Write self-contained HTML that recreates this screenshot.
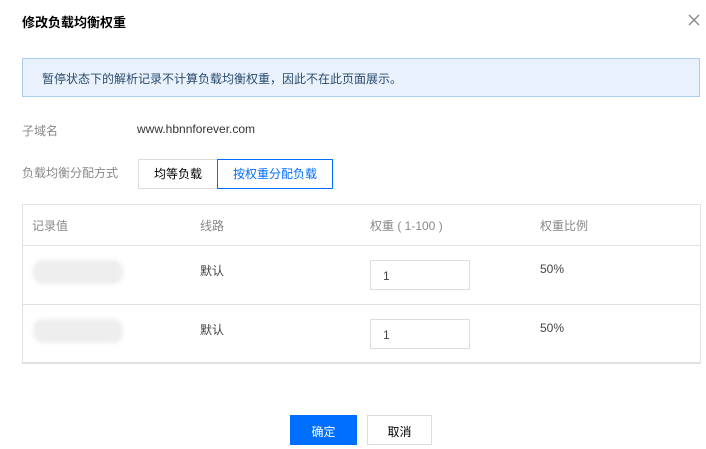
<!DOCTYPE html>
<html><head><meta charset="utf-8"><style>
*{margin:0;padding:0;box-sizing:border-box}
body{width:706px;height:433px;overflow:hidden;background:#fff;font-family:"Liberation Sans","Noto Sans CJK SC",sans-serif;font-size:12px;color:#444;position:relative}
.a{position:absolute}
</style></head><body>
<div class="a" style="left:22px;top:12px;font-size:13px;font-weight:bold;color:#000">修改负载均衡权重</div>
<svg class="a" style="left:688px;top:14px" width="12" height="12"><path d="M1 1L11 11M11 1L1 11" stroke="#888" stroke-width="1.4"/></svg>
<div class="a" style="left:22px;top:58px;width:678px;height:39px;background:#e9f2fc;border:1px solid #a9cdf0"></div>
<div class="a" style="left:42px;top:70px;color:#2a4a6e">暂停状态下的解析记录不计算负载均衡权重，因此不在此页面展示。</div>
<div class="a" style="left:22px;top:122px;color:#888">子域名</div>
<div class="a" style="left:137px;top:122px;color:#333">www.hbnnforever.com</div>
<div class="a" style="left:22px;top:164px;color:#888">负载均衡分配方式</div>
<div class="a" style="left:138px;top:159px;width:80px;height:30px;border:1px solid #ddd;text-align:center;line-height:28px;color:#000">均等负载</div>
<div class="a" style="left:217px;top:159px;width:116px;height:30px;border:1px solid #006eff;text-align:center;line-height:28px;color:#006eff">按权重分配负载</div>
<div class="a" style="left:22px;top:204px;width:679px;height:160px;border:1px solid #e2e2e2;border-bottom:2px solid #e2e2e2"></div>
<div class="a" style="left:22px;top:245px;width:679px;height:1px;background:#e2e2e2"></div>
<div class="a" style="left:22px;top:304px;width:679px;height:1px;background:#e2e2e2"></div>
<div class="a" style="left:32px;top:217px;color:#888">记录值</div>
<div class="a" style="left:200px;top:217px;color:#888">线路</div>
<div class="a" style="left:370px;top:217px;color:#888">权重 ( 1-100 )</div>
<div class="a" style="left:540px;top:217px;color:#888">权重比例</div>
<div class="a" style="left:33px;top:260px;width:90px;height:24px;background:#eee;border-radius:10px;filter:blur(2px)"></div>
<div class="a" style="left:33px;top:319px;width:90px;height:24px;background:#eee;border-radius:10px;filter:blur(2px)"></div>
<div class="a" style="left:200px;top:262px">默认</div>
<div class="a" style="left:200px;top:321px">默认</div>
<div class="a" style="left:370px;top:260px;width:100px;height:30px;border:1px solid #ddd;padding:8px 0 0 12px">1</div>
<div class="a" style="left:370px;top:319px;width:100px;height:30px;border:1px solid #ddd;padding:8px 0 0 12px">1</div>
<div class="a" style="left:540px;top:262px">50%</div>
<div class="a" style="left:540px;top:321px">50%</div>
<div class="a" style="left:290px;top:415px;width:67px;height:30px;background:#006eff;color:#fff;text-align:center;line-height:34px">确定</div>
<div class="a" style="left:367px;top:415px;width:65px;height:30px;border:1px solid #ddd;color:#000;text-align:center;line-height:32px">取消</div>
</body></html>
